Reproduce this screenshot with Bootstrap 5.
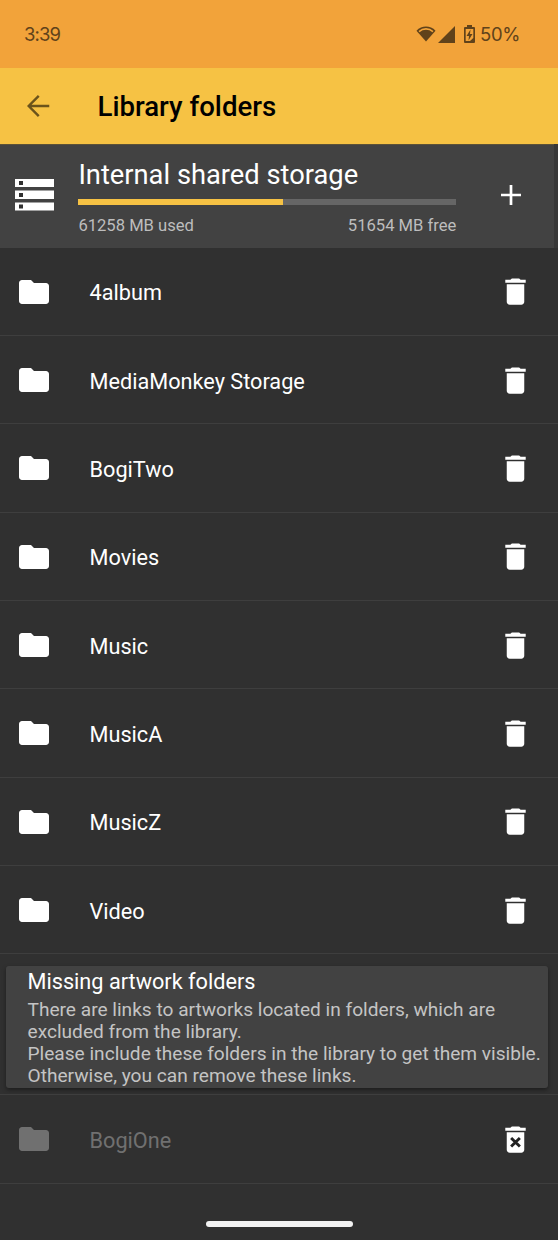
<!DOCTYPE html>
<html lang="en">
<head>
<meta charset="utf-8">
<meta name="viewport" content="width=device-width, initial-scale=1">
<title>Library folders</title>
<link href="https://cdn.jsdelivr.net/npm/bootstrap@5.3.0/dist/css/bootstrap.min.css" rel="stylesheet">
<style>
body{background:#303030;color:#fff;font-family:Roboto,"Noto Sans",sans-serif;height:1240px;overflow:hidden}
svg{display:block;flex:none}
.status{height:68px;background:#f2a33a;color:#60421a;font:18.5px/22px Inter,sans-serif;padding:0 38px 0 24px}
.status .time{letter-spacing:-.9px}
.status .pct{letter-spacing:-.4px;margin-left:5px}
.appbar{height:76px;background:#f6c244;color:#000;padding-left:20px}
.appbar h1{font-size:27.6px;line-height:32px;font-weight:500;margin:2px 0 0 41.5px}
.storage{height:103.5px;background:#424242;border-right:4px solid #373737;box-shadow:inset 0 1px #5c5238;padding:15px 26px 0 14.5px}
.storage h2{font-size:27.3px;line-height:32px;font-weight:400;margin:0}
.usage{width:378px;margin-left:24.9px}
.usage .progress{height:6px;border-radius:0;background:#666;margin:8px 0 11px}
.usage .progress-bar{background:#f6c244}
.usage .amounts{font-size:16.6px;line-height:20px;color:#bdbdbd}
.folder{height:88.35px;padding:0 24px 0 16px;border-bottom:1.5px solid #3e3e3e}
.folder .title{font-size:21.7px;line-height:28px;margin:4px 0 0 37.5px}
.folder .dir{margin-top:1px}
.folder .bin{width:35px;height:35px;margin:1px 1px 0 auto}
.folder.off .title,.folder.off .dir{color:#707070}
.notice{margin:11.5px 10px 0 6px;height:122.5px;background:#424242;border-radius:3px;box-shadow:0 2px 4px rgba(0,0,0,.4);padding:3px 0 0 21.5px;white-space:nowrap}
.notice h3{font-size:21.7px;line-height:26px;font-weight:400;margin:0 0 4px}
.notice p{font-size:19.12px;line-height:22.2px;color:#c4c4c4;margin:0}
.missing{margin-top:6px;border-top:1.5px solid #3e3e3e}
.homebar{width:147px;height:6px;background:#f2f2f2;margin:37px auto 0;border-radius:3px}
</style>
</head>
<body>
<svg class="d-none">
<symbol id="dir" viewBox="0 0 24 24"><path fill="currentColor" d="M10 4H4c-1.100 0-2 .9-2 2v12c0 1.100.9 2 2 2h16c1.100 0 2-.9 2-2V8c0-1.100-.9-2-2-2h-8z"/></symbol>
<symbol id="bin" viewBox="0 0 24 24"><path fill="currentColor" d="M6 19c0 1.100.9 2 2 2h8c1.100 0 2-.9 2-2V7H6zM19 4h-3.500l-1-1h-5l-1 1H5v2h14z"/></symbol>
</svg>
<div class="status d-flex align-items-center justify-content-between">
<span class="time">3:39</span>
<span class="d-flex align-items-center">
<svg width="20" height="18" viewBox="0 0 21 18"><path fill="currentColor" d="M.5 5.500C6-.2 15-.2 20.500 5.500L10.500 17z"/><path d="M3.200 6.400C7.500 2.700 13.500 2.700 17.800 6.400" fill="none" stroke="#f2a33a" stroke-width="1.700"/></svg>
<svg style="margin-left:2px" width="17" height="17" viewBox="0 0 17 17"><path fill="currentColor" d="M17 0v17H0z"/></svg>
<svg style="margin-left:9px" width="11" height="18" viewBox="0 0 11 18"><path fill="currentColor" d="M3 0h5v2h2q1 0 1 1v14q0 1-1 1H1q-1 0-1-1V3q0-1 1-1h2z"/><path d="M1.700 4h7.600v9L6 16H1.700z" fill="#f2a33a"/><path fill="currentColor" d="M6.500 4.500 2.500 11H5L4.500 15.500 8.500 9H6z"/></svg>
<span class="pct">50%</span>
</span>
</div>
<header class="appbar d-flex align-items-center">
<svg width="36" height="36" viewBox="0 0 24 24"><path fill="none" stroke="#6b531b" stroke-width="1.600" d="M19.500 12H6M12.500 5.300 5.800 12l6.700 6.700"/></svg>
<h1>Library folders</h1>
</header>
<section class="storage d-flex">
<svg width="39" height="33" viewBox="0 0 39 33" style="margin-top:20px"><path fill="#fff" d="M0 0h39v8H0zM0 11.500h39v8.500H0zM0 23.500h39v8H0z"/><path fill="#303030" d="M4 2h4v4H4zM4 14h4v4H4zM4 25.500h4v4H4z"/></svg>
<div class="usage">
<h2>Internal shared storage</h2>
<div class="progress"><div class="progress-bar" style="width:54.25%"></div></div>
<div class="amounts d-flex justify-content-between"><span>61258 MB used</span><span>51654 MB free</span></div>
</div>
<svg class="ms-auto" style="margin-top:26px;margin-right:7px" width="20" height="20" viewBox="0 0 20 20"><path d="M10 0v20M0 10h20" stroke="#fff" stroke-width="2.700"/></svg>
</section>
<main>
<div class="folder d-flex align-items-center"><svg class="dir" width="36" height="36"><use href="#dir"/></svg><span class="title">4album</span><svg class="bin"><use href="#bin"/></svg></div>
<div class="folder d-flex align-items-center"><svg class="dir" width="36" height="36"><use href="#dir"/></svg><span class="title">MediaMonkey Storage</span><svg class="bin"><use href="#bin"/></svg></div>
<div class="folder d-flex align-items-center"><svg class="dir" width="36" height="36"><use href="#dir"/></svg><span class="title">BogiTwo</span><svg class="bin"><use href="#bin"/></svg></div>
<div class="folder d-flex align-items-center"><svg class="dir" width="36" height="36"><use href="#dir"/></svg><span class="title">Movies</span><svg class="bin"><use href="#bin"/></svg></div>
<div class="folder d-flex align-items-center"><svg class="dir" width="36" height="36"><use href="#dir"/></svg><span class="title">Music</span><svg class="bin"><use href="#bin"/></svg></div>
<div class="folder d-flex align-items-center"><svg class="dir" width="36" height="36"><use href="#dir"/></svg><span class="title">MusicA</span><svg class="bin"><use href="#bin"/></svg></div>
<div class="folder d-flex align-items-center"><svg class="dir" width="36" height="36"><use href="#dir"/></svg><span class="title">MusicZ</span><svg class="bin"><use href="#bin"/></svg></div>
<div class="folder d-flex align-items-center"><svg class="dir" width="36" height="36"><use href="#dir"/></svg><span class="title">Video</span><svg class="bin"><use href="#bin"/></svg></div>
<section class="notice">
<h3>Missing artwork folders</h3>
<p>There are links to artworks located in folders, which are<br>excluded from the library.<br>Please include these folders in the library to get them visible.<br>Otherwise, you can remove these links.</p>
</section>
<div class="missing">
<div class="folder off d-flex align-items-center"><svg class="dir" width="36" height="36"><use href="#dir"/></svg><span class="title">BogiOne</span><svg class="bin" viewBox="0 0 24 24"><use href="#bin"/><path d="m9 11 6 5.800m0-5.800-6 5.800" stroke="#222" stroke-width="2"/></svg></div>
</div>
</main>
<div class="homebar"></div>
<script src="https://cdn.jsdelivr.net/npm/bootstrap@5.3.0/dist/js/bootstrap.bundle.min.js"></script>
</body>
</html>
